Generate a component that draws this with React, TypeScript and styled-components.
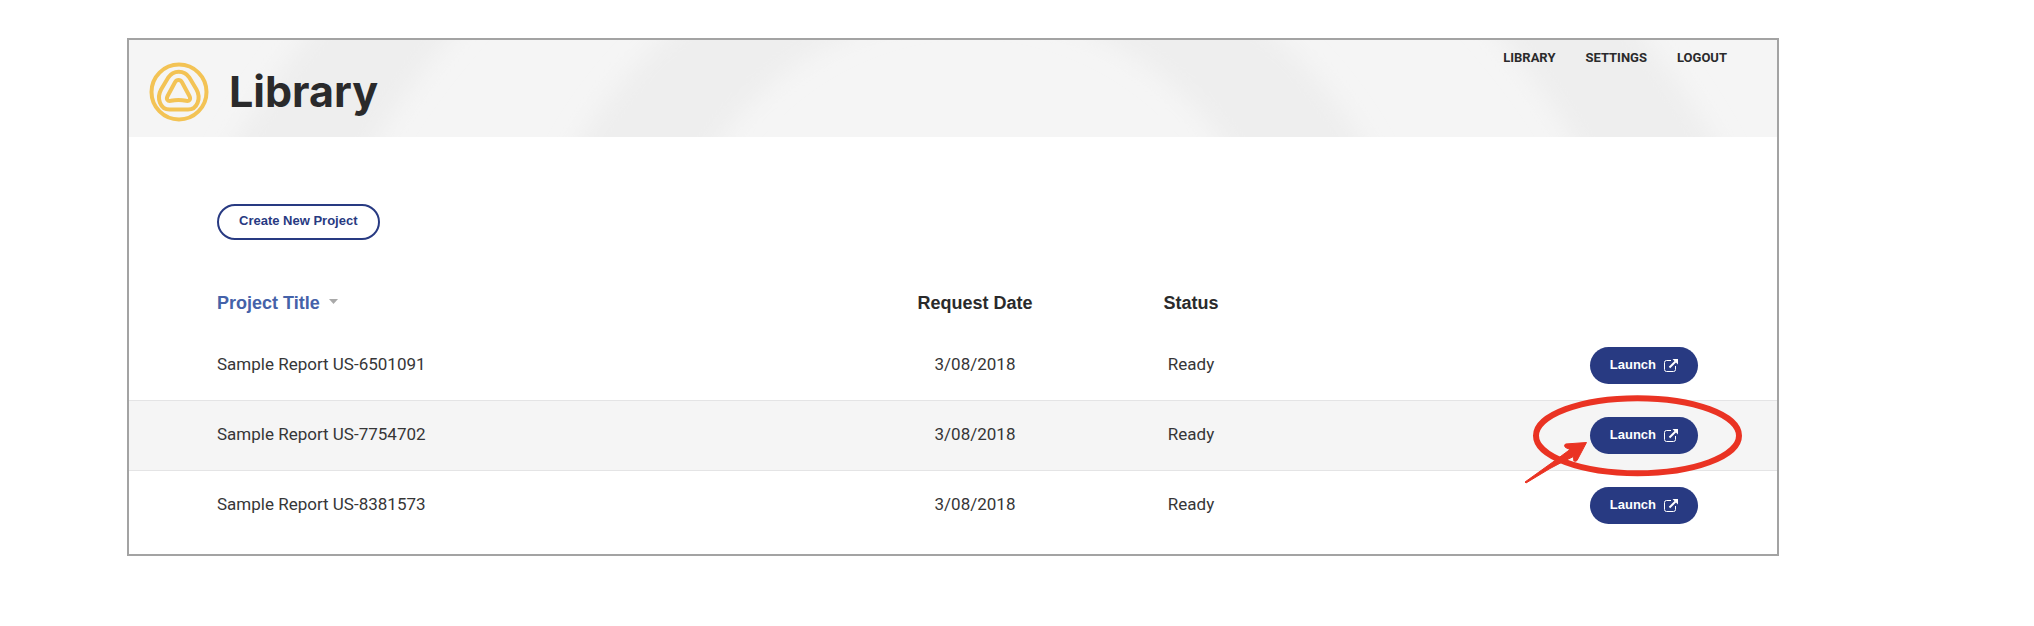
import React from "react";
import styled, { createGlobalStyle, css } from "styled-components";

const INK = "#2a2a2b";
const NAVY = "#283a82";
const GREY = "#f5f5f5";
const RED = "#ea3323";
const HEADING_FONT = `"Liberation Sans", Arial, sans-serif`;

const GlobalStyle = createGlobalStyle`
  *, *::before, *::after { box-sizing: border-box; }
  body {
    margin: 0;
    background: #fff;
    color: ${INK};
    font-family: Roboto, "Liberation Sans", sans-serif;
    font-size: 17px;
    line-height: 20px;
  }
`;

const Page = styled.div`
  padding: 38px 255px 38px 127px;
`;

const Frame = styled.div`
  border: 2px solid #a3a3a3;
  background: #fff;
`;

const Header = styled.header`
  position: relative;
  display: flex;
  justify-content: space-between;
  align-items: flex-start;
  overflow: hidden;
  background: ${GREY};
`;

const Rings = styled.svg`
  position: absolute;
  inset: 0;
  width: 100%;
  height: 100%;
`;

const Brand = styled.div`
  position: relative;
  display: flex;
  align-items: center;
  gap: 20px;
  padding: 22px 20px 15px;
`;

const Title = styled.h1`
  margin: 0;
  padding-bottom: 2px;
  font: 700 43px/56px Inter, ${HEADING_FONT};
`;

const Nav = styled.nav`
  position: relative;
  display: flex;
  gap: 30px;
  padding: 8px 50px 0 0;
`;

const NavLink = styled.a`
  color: ${INK};
  font-size: 13px;
  font-weight: 700;
  line-height: 20px;
  text-decoration: none;
  text-transform: uppercase;
`;

const Toolbar = styled.div`
  display: flex;
  padding: 67px 88px 46px;
`;

const pill = css`
  display: inline-flex;
  align-items: center;
  justify-content: center;
  border-radius: 19px;
  font: 700 13px/18px ${HEADING_FONT};
  white-space: nowrap;
  cursor: pointer;
`;

const CreateButton = styled.button`
  ${pill}
  padding: 6px 20px 8px;
  border: 2px solid ${NAVY};
  background: #fff;
  color: ${NAVY};
`;

const LaunchButton = styled.button`
  ${pill}
  gap: 8px;
  padding: 9px 20px 10px;
  border: 0;
  background: ${NAVY};
  color: #fff;
`;

const Table = styled.table`
  width: 100%;
  table-layout: fixed;
  border-collapse: separate;
  border-spacing: 0;
  margin-bottom: 14px;
`;

const Col = styled.col<{ $width?: number }>`
  width: ${(p) => (p.$width ? `${p.$width}px` : "auto")};
`;

const HeadCell = styled.th<{ $start?: boolean }>`
  height: 45px;
  padding: 7px 0 0 ${(p) => (p.$start ? "88px" : "0")};
  text-align: ${(p) => (p.$start ? "left" : "center")};
  vertical-align: top;
  font: 700 18px/20px ${HEADING_FONT};
`;

const SortButton = styled.button`
  display: inline-flex;
  align-items: center;
  gap: 9px;
  padding: 0;
  border: 0;
  background: none;
  color: #4562a9;
  font: inherit;
  cursor: pointer;
`;

const SortArrow = styled.svg`
  margin-bottom: 4px;
`;

const Row = styled.tr<{ $shaded: boolean }>`
  & > td {
    height: ${(p) => (p.$shaded ? "71px" : "69px")};
    ${(p) =>
      p.$shaded &&
      css`
        border: solid #e4e4e5;
        border-width: 1px 0;
        background: ${GREY};
      `}
  }
`;

const Cell = styled.td<{ $align?: "left" | "center" }>`
  padding: 0 0 4px ${(p) => (p.$align === "left" ? "88px" : "0")};
  color: #363637;
  text-align: ${(p) => p.$align ?? "center"};
  vertical-align: middle;
`;

const ActionCell = styled.td`
  padding: 0 79px 0 0;
  vertical-align: middle;
`;

const Action = styled.div`
  position: relative;
  display: flex;
  width: max-content;
  margin-left: auto;
`;

const Callout = styled.svg`
  position: absolute;
  z-index: 1;
  right: -48px;
  top: -25px;
  pointer-events: none;
`;

function HeaderRings() {
  return (
    <Rings viewBox="0 0 1648 97" preserveAspectRatio="xMidYMin slice" aria-hidden="true">
      <defs>
        <filter id="soften" x="-5%" y="-5%" width="110%" height="110%">
          <feGaussianBlur stdDeviation="12" />
        </filter>
      </defs>
      <g fill="#eeeeee" fillRule="evenodd" filter="url(#soften)">
        <path d="M-7 527a853 853 0 0 1 1706 0zM155 447a691 691 0 0 1 1382 0z" />
        <path d="M385 337a457 457 0 0 1 914 0zM535 277a307 307 0 0 1 614 0z" />
      </g>
    </Rings>
  );
}

function Logo() {
  return (
    <svg width="60" height="60" viewBox="0 0 60 60" fill="none" stroke="#f3c355" strokeWidth="4" aria-hidden="true">
      <circle cx="30" cy="30" r="27.500" />
      <path d="M29.800 9.700c4.600 0 8.200 2.200 10.400 5.600l7.300 12.200c4.800 8.600 1 20.100-8.500 20.100H20.600c-9.500 0-13.300-11.500-8.500-20.100l7.300-12.200c2.200-3.400 5.800-5.600 10.400-5.600z" />
      <path d="M29.500 18c1.500 0 2.600.8 3.500 2.300l7.400 13.700c1.700 3.300 0 5.400-3.200 4.800-5-1.100-10.400-1.100-15.400 0-3.200.6-4.900-1.500-3.200-4.800L26 20.300c.9-1.500 2-2.300 3.500-2.300z" />
    </svg>
  );
}

function LaunchIcon() {
  return (
    <svg width="14" height="13" viewBox="0 0 14 13" fill="none" stroke="#fff" aria-hidden="true">
      <path d="M7 1.500H2.500a2 2 0 0 0-2 2v7a2 2 0 0 0 2 2h7a2 2 0 0 0 2-2V7" />
      <path d="M5.500 8.500l6-6" strokeWidth="2" />
      <path d="M8.500 0H14v5.500z" fill="#fff" stroke="none" />
    </svg>
  );
}

function Highlight() {
  return (
    <Callout width="226" height="94" viewBox="0 0 226 94" aria-hidden="true">
      <ellipse cx="117.500" cy="43.700" rx="101.500" ry="37.500" fill="none" stroke={RED} strokeWidth="6" />
      <path
        d="M5 90L28 73.500Q38 66.500 50 57.500L45.500 55.500Q43.500 53.500 45.500 52L66.500 50.500 57 68.500Q55.500 70 53.800 68.800L53.500 64.500Q42 70 30 76.500L6 91z"
        fill={RED}
        stroke={RED}
        strokeLinejoin="round"
      />
    </Callout>
  );
}

const projects = [
  { title: "Sample Report US-6501091", date: "3/08/2018", status: "Ready", highlighted: false },
  { title: "Sample Report US-7754702", date: "3/08/2018", status: "Ready", highlighted: true },
  { title: "Sample Report US-8381573", date: "3/08/2018", status: "Ready", highlighted: false },
];

export default function App() {
  return (
    <Page>
      <GlobalStyle />
      <Frame>
        <Header>
          <HeaderRings />
          <Brand>
            <Logo />
            <Title>Library</Title>
          </Brand>
          <Nav>
            <NavLink href="#library">Library</NavLink>
            <NavLink href="#settings">Settings</NavLink>
            <NavLink href="#logout">Logout</NavLink>
          </Nav>
        </Header>
        <main>
          <Toolbar>
            <CreateButton type="button">Create New Project</CreateButton>
          </Toolbar>
          <Table>
            <colgroup>
              <Col />
              <Col $width={216} />
              <Col $width={216} />
              <Col $width={478} />
            </colgroup>
            <thead>
              <tr>
                <HeadCell scope="col" $start>
                  <SortButton type="button">
                    Project Title
                    <SortArrow width="9" height="5" viewBox="0 0 9 5" aria-hidden="true">
                      <path d="M0 0h9L4.500 5z" fill="#a9a9a9" />
                    </SortArrow>
                  </SortButton>
                </HeadCell>
                <HeadCell scope="col">Request Date</HeadCell>
                <HeadCell scope="col">Status</HeadCell>
                <HeadCell as="td" />
              </tr>
            </thead>
            <tbody>
              {projects.map((project, index) => (
                <Row key={project.title} $shaded={index % 2 === 1}>
                  <Cell $align="left">{project.title}</Cell>
                  <Cell>{project.date}</Cell>
                  <Cell>{project.status}</Cell>
                  <ActionCell>
                    <Action>
                      <LaunchButton type="button">
                        Launch
                        <LaunchIcon />
                      </LaunchButton>
                      {project.highlighted && <Highlight />}
                    </Action>
                  </ActionCell>
                </Row>
              ))}
            </tbody>
          </Table>
        </main>
      </Frame>
    </Page>
  );
}
